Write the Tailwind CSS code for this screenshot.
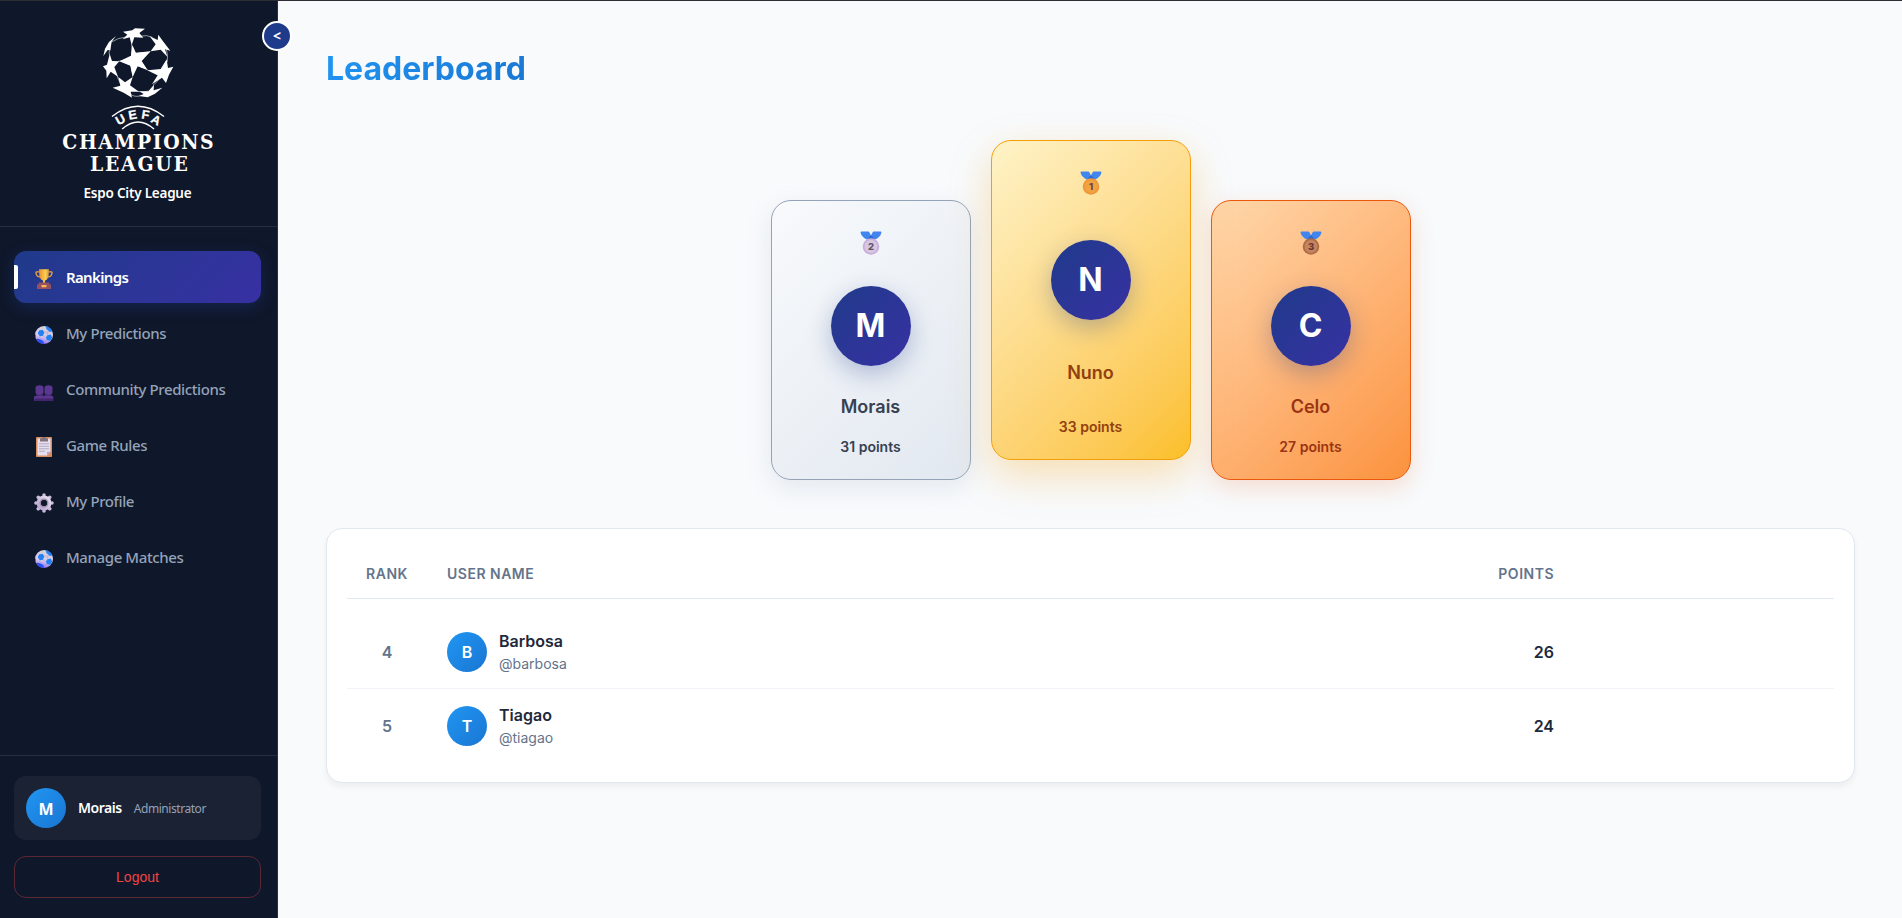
<!DOCTYPE html>
<html lang="en">
<head>
<meta charset="utf-8">
<title>Leaderboard</title>
<script src="https://cdn.jsdelivr.net/npm/@tailwindcss/browser@4"></script>
</head>
<body class="h-screen overflow-hidden bg-[#f8fafc] font-['Inter',sans-serif]">
<svg width="0" height="0" class="absolute">
  <defs>
    <linearGradient id="gold" x1="0" x2="1"><stop offset="0" stop-color="#f08a35"/><stop offset=".65" stop-color="#fbd04f"/><stop offset="1" stop-color="#d9903a"/></linearGradient>
    <linearGradient id="ballg" x1=".6" y1="0" x2=".4" y2="1"><stop offset="0" stop-color="#d5d3d6"/><stop offset=".6" stop-color="#d3c8ee"/><stop offset="1" stop-color="#8a6cf5"/></linearGradient>
    <linearGradient id="gearg" x1="1" y1="0" x2="0" y2="1"><stop offset="0" stop-color="#e6dff0"/><stop offset="1" stop-color="#b9a3cf"/></linearGradient>
    <symbol id="ball" viewBox="0 0 18 18">
      <circle cx="9" cy="9" r="9" fill="url(#ballg)"/>
      <path d="M4 4.500 7.500 3.800 9.300 6.200 8 9.800 4.800 10.200 2.800 7.300zM10.800.300C13.800.700 16.500 2.600 17.500 5.600L14.800 6 11.400 2.900zM12.400 9.200 15.700 8.600 17.300 11.400 15 14.900 11.900 14 10.900 11.600z" fill="#2480f5"/>
      <path d="M2.200 12.800 5 13.200 8.300 15 9.300 18C5.600 18.100 3 16.500 1.500 13.800zM0 8.200 1 9.600.8 12C.1 10.700 0 9.500 0 8.200z" fill="#2a50fa"/>
      <path d="M9.300 6.200 12.400 6l2.400-.2M12.400 6l.3 3.200M8 9.800l2.900 1.800M4.800 10.200 5 13.200M12 14 8.300 15" stroke="#a9a0c4" stroke-width=".5" fill="none"/>
    </symbol>
    <symbol id="ribbon" viewBox="0 0 22 24">
      <path d="M.5 1.600Q.5.500 1.600.500H8.200Q9 .500 9.500 1.500L11 4.500 12.500 1.500Q13 .500 13.800.500H20.400Q21.500.500 21.500 1.600L20.300 4.500Q17.500 8 14.500 9H7.500Q4.500 8 1.700 4.500Z" fill="#4086ee"/>
      <path d="M8.800 6.300 11 4.500 13.200 6.300 14 9H8z" fill="#2f68cf"/>
    </symbol>
  </defs>
</svg>

<div class="flex h-full border-t border-[#2d2d33]">
  <aside class="relative flex w-[278px] shrink-0 flex-col border-r border-[#272f40] bg-[#0f172a] font-['Noto_Sans','Open_Sans',sans-serif]">
    <button class="absolute top-5 left-[262px] z-10 flex size-[30px] items-center justify-center rounded-full border-2 border-white bg-[#1e3a8a] text-sm font-bold leading-none text-white">&lt;</button>

    <header class="h-[226px] border-b border-[#272e3f]">
      <svg class="block" width="277" height="178" viewBox="0 1 277 178" fill="#fff">
        <g transform="translate(95 22) scale(.3333)">
          <path d="M112 69 122 92 167 88 140 117 158 145 128 133 113 165 106 131 73 118 108 101Z"/>
          <path d="M84 29 112 25 120 19 150 20 133 33 145 47 118 46 110 70 104 46 83 52 97 38Z"/>
          <path d="M190 38 204 58 226 86 210 82 217 104 197 83 167 88 182 67 164 43 188 54Z"/>
          <path d="M215 112 219 138 235 134 222 158 213 183 201 167 171 187 188 160 158 145 197 141Z"/>
          <path d="M131 222 146 216 133 208 160 208 177 188 176 205 202 197 180 215 158 226Z"/>
          <path d="M53 197 76 191 70 165 90 181 113 165 105 190 132 209 107 209 111 227 86 212Z"/>
          <path d="M44 96 51 117 73 118 58 135 69 164 47 149 35 169 34 146 24 133 36 128Z"/>
          <path d="M63 42 50 59 46 85 38 84 25 102 30 80 42 60Z"/>
          <g fill="none" stroke="#fff" stroke-width="1.600">
            <path d="M110 67C110 75 112 85 118 98M165 88 145 100M156 143Q168 150 188 158M113 163Q112 155 116 145M70 118Q90 116 108 108M50 60Q68 47 95 45M45 80Q40 95 44 100M140 42Q154 38 172 46M214 80Q220 103 217 120M66 160Q68 170 76 184M128 208Q145 213 160 207M174 190Q190 178 196 165M105 215Q116 226 135 222"/>
          </g>
          <g fill="#fff" stroke="#fff" stroke-width="3" stroke-linejoin="round">
            <path d="M112 74 122 95 158 91 137 117 152 139 127 130 113 157 108 129 80 118 110 103Z"/>
            <path d="M92 45 106 32 135 25 128 42 112 44ZM186 55 200 64 212 78 196 78 182 80 188 68ZM205 144 221 142 212 164 196 158ZM86 190 100 188 104 203 88 204ZM40 124 54 122 56 140 40 142Z" stroke-width="1"/>
          </g>
        </g>
        <g fill="none" stroke="#fff" stroke-width="1.500"><path d="M112 116.500Q138 96 164 116.500M122.200 129Q138 115 154 129"/></g>
        <g font-family="Liberation Sans,sans-serif" font-weight="700" font-size="12.500" text-anchor="middle" stroke="#fff" stroke-width=".3">
          <text transform="translate(122.400 123.300) rotate(-29)">U</text>
          <text transform="translate(133.300 119) rotate(-10)">E</text>
          <text transform="translate(144.700 119) rotate(10)">F</text>
          <text transform="translate(154 123.800) rotate(29)">A</text>
        </g>
        <g font-family="DejaVu Serif,serif" font-weight="700" font-size="20.500" transform="scale(.92 1)">
          <text x="67.800" y="149" textLength="164.500" lengthAdjust="spacing">CHAMPIONS</text>
          <text x="97.800" y="171" textLength="106.500" lengthAdjust="spacing">LEAGUE</text>
        </g>
      </svg>
      <p class="mt-1 pr-[2px] text-center text-[13.500px] font-semibold leading-5 tracking-[-0.220px] text-white">Espo City League</p>
    </header>

    <nav class="flex flex-1 flex-col gap-1 pt-6 pr-4 pl-[14px] text-[15px] font-medium tracking-[-0.400px] text-[#94a3b8]">
      <a class="relative flex h-[52px] items-center rounded-xl bg-linear-135 from-[#1e3a8a] to-[#3730a3] pl-5 font-semibold tracking-[-0.650px] text-white shadow-[0_4px_15px_rgba(30,58,138,0.4)]">
        <span class="absolute top-[14px] left-0 h-6 w-1 rounded-r-[2px] bg-white"></span>
        <svg class="mt-1 mr-3" width="20" height="20" viewBox="0 0 20 20">
          <path d="M5.500 2.800H2.600Q1.800 2.800 2 4 2.500 8 6.500 8M14.500 2.800h2.900q.8 0 .6 1.200-.5 4-4.500 4" fill="none" stroke="#e8a63c" stroke-width="1.300"/>
          <path d="M5 .2h10l-.3 6Q14 10.800 11 11.500V14H9v-2.500Q6 10.800 5.300 6.200z" fill="url(#gold)"/>
          <path d="M5 13.500H15L15.800 15.500H17V20H3V15.500H4.200z" fill="#965060"/>
          <rect x="7.500" y="16" width="5" height="2.200" rx=".4" fill="#f5b755"/>
        </svg>
        <span>Rankings</span>
      </a>
      <a class="flex h-[52px] items-center pl-5"><svg class="mt-[3px] ml-[1px] mr-[13px]" width="18" height="18"><use href="#ball"/></svg><span>My Predictions</span></a>
      <a class="flex h-[52px] items-center pl-5">
        <svg class="mt-2 mr-3" width="20" height="16" viewBox="0 0 20 16" fill="#5b378f">
          <path d="M1.500 3Q1.500.3 5.500.3T9.500 3V7.500Q9 10 7.500 10.600H9.800V16H0V12Q.3 10.800 3.500 10.600 1.800 9.500 1.500 7.500z"/>
          <path d="M10.500 3Q10.500.3 14.500.3T18.500 3V7.500Q18 9.500 16.500 10.600 19 10.800 19.300 12V16H10V10.600H12.500Q11 10 10.500 7.500z"/>
          <path d="M1 13.500H9.500V16H0zM10.200 13.500H19V16H10.200z" fill="#43246c"/>
          <path d="M2 7.500Q5.500 12.500 9 7.500L8 11H3.500zM11 7.500Q14.500 12.500 18 7.500L16.500 11H12z" fill="#48286f"/>
        </svg><span>Community Predictions</span>
      </a>
      <a class="flex h-[52px] items-center pl-5">
        <svg class="mt-[3px] mr-3" width="20" height="20" viewBox="0 0 20 20">
          <rect x="2" y="0" width="16" height="20" rx=".8" fill="#d98d5c"/>
          <path d="M3.500 1.500H16.500V14.800L13 18.500H3.500z" fill="#e6dff0"/>
          <path d="M13 14.800h3.500L13 18.500z" fill="#b9a9cc"/>
          <path d="M6 4.500V2.200Q6 1 7.500 1H8.500V0h3V1h1Q14 1 14 2.200V4.500z" fill="#83747d"/>
          <path d="M5 6.800H15M5 9.300H15M5 11.800H15M5 14.300H11" stroke="#b0a6ba" stroke-width=".9"/>
        </svg><span>Game Rules</span>
      </a>
      <a class="flex h-[52px] items-center pl-5">
        <svg class="mt-[3px] mr-3" width="20" height="20" viewBox="0 0 20 20">
          <g stroke-width="3.600" stroke-linecap="round"><path d="M10 2V2.100M10 18V17.900M2 10H2.100M18 10H17.900M4.300 4.300 4.500 4.500M15.700 15.700 15.500 15.500M4.300 15.700 4.500 15.500M15.700 4.300 15.500 4.500" stroke="#cbbbdc"/></g>
          <circle cx="10" cy="10" r="5.400" fill="#0f172a" stroke="url(#gearg)" stroke-width="4.200"/>
          <circle cx="10" cy="10" r="3.900" fill="none" stroke="#978ba4" stroke-width="1.100"/>
        </svg><span>My Profile</span>
      </a>
      <a class="flex h-[52px] items-center pl-5"><svg class="mt-[3px] ml-[1px] mr-[13px]" width="18" height="18"><use href="#ball"/></svg><span>Manage Matches</span></a>
    </nav>

    <footer class="flex h-[163px] flex-col gap-4 border-t border-[#272e3f] pt-5 pr-4 pl-[14px]">
      <div class="flex h-16 shrink-0 items-center rounded-xl bg-[#1b2233] pl-3">
        <div class="flex size-10 items-center justify-center rounded-full bg-linear-135 from-[#2196f3] to-[#1976d2] pt-px text-base font-bold text-white">M</div>
        <span class="ml-3 text-sm font-semibold tracking-[-0.450px] text-white">Morais</span>
        <span class="ml-3 pt-px text-xs tracking-[-0.450px] text-[#94a3b8]">Administrator</span>
      </div>
      <button class="h-[42px] shrink-0 rounded-xl border border-[#ef4444]/35 font-['Liberation_Sans',sans-serif] text-sm text-[#ef4444]">Logout</button>
    </footer>
  </aside>

  <main class="flex-1 pt-12 pr-[47px] pl-12">
    <h1 class="w-fit bg-linear-135 from-[#2196f3] to-[#1976d2] bg-clip-text text-[32px] leading-10 font-bold text-transparent">Leaderboard</h1>

    <section class="mt-[51px] flex h-[340px] items-end justify-center gap-5">
      <article class="flex h-[280px] w-[200px] flex-col items-center rounded-[20px] border border-[#94a3b8] bg-linear-135 from-[#f8fafc] to-[#e2e8f0] pt-[30px] text-[#374151] shadow-[0_8px_25px_rgba(148,163,184,0.2)]">
        <svg width="22" height="24" viewBox="0 0 22 24"><use href="#ribbon"/><circle cx="11" cy="15.500" r="8.300" fill="#c9aedd"/><circle cx="11" cy="15.500" r="6.500" fill="#d6c8e1"/><text x="11" y="18.900" text-anchor="middle" font-family="Inter" font-weight="800" font-size="9.500" fill="#625469">2</text></svg>
        <div class="mt-[31px] flex size-20 shrink-0 items-center justify-center rounded-full bg-linear-135 from-[#1e3a8a] to-[#3730a3] text-[32px] font-bold text-white shadow-[0_8px_25px_rgba(30,58,138,0.3)]">M</div>
        <h2 class="mt-[27px] text-lg leading-7 font-semibold">Morais</h2>
        <p class="mt-[16px] text-sm leading-5 font-semibold">31 points</p>
      </article>
      <article class="z-10 mb-5 flex h-[320px] w-[200px] flex-col items-center rounded-[20px] border border-[#f59e0b] bg-linear-135 from-[#fef3c7] to-[#fbbf24] pt-[30px] text-[#92400e] shadow-[0_15px_40px_rgba(245,158,11,0.3)]">
        <svg width="22" height="24" viewBox="0 0 22 24"><use href="#ribbon"/><circle cx="11" cy="15.500" r="8.300" fill="#ee963a"/><circle cx="11" cy="15.500" r="6.500" fill="#f2a341"/><text x="11" y="18.900" text-anchor="middle" font-family="Inter" font-weight="800" font-size="9.500" fill="#71434e">1</text></svg>
        <div class="mt-[45px] flex size-20 shrink-0 items-center justify-center rounded-full bg-linear-135 from-[#1e3a8a] to-[#3730a3] text-[32px] font-bold text-white shadow-[0_8px_25px_rgba(30,58,138,0.3)]">N</div>
        <h2 class="mt-[39px] text-lg leading-7 font-semibold">Nuno</h2>
        <p class="mt-[30px] text-sm leading-5 font-semibold">33 points</p>
      </article>
      <article class="flex h-[280px] w-[200px] flex-col items-center rounded-[20px] border border-[#ea580c] bg-linear-135 from-[#fed7aa] to-[#fb923c] pt-[30px] text-[#9a3412] shadow-[0_8px_25px_rgba(234,88,12,0.18)]">
        <svg width="22" height="24" viewBox="0 0 22 24"><use href="#ribbon"/><circle cx="11" cy="15.500" r="8.300" fill="#ae6b4b"/><circle cx="11" cy="15.500" r="6.500" fill="#c5855a"/><text x="11" y="18.900" text-anchor="middle" font-family="Inter" font-weight="800" font-size="9.500" fill="#6b3540">3</text></svg>
        <div class="mt-[31px] flex size-20 shrink-0 items-center justify-center rounded-full bg-linear-135 from-[#1e3a8a] to-[#3730a3] text-[32px] font-bold text-white shadow-[0_8px_25px_rgba(30,58,138,0.3)]">C</div>
        <h2 class="mt-[27px] text-lg leading-7 font-semibold">Celo</h2>
        <p class="mt-[16px] text-sm leading-5 font-semibold">27 points</p>
      </article>
    </section>

    <section class="mt-12 h-[255px] rounded-2xl border border-[#e2e8f0] bg-white px-5 pt-5 shadow-[0_4px_6px_rgba(0,0,0,0.05)]">
      <div class="flex h-[50px] items-center border-b border-[#e2e8f0] pt-px text-sm font-semibold tracking-[0.500px] text-[#64748b]">
        <span class="w-20 text-center">RANK</span>
        <span class="ml-5 flex-1">USER NAME</span>
        <span class="mr-[280px]">POINTS</span>
      </div>
      <div class="mt-4 flex h-[74px] items-center border-b border-[#f1f5f9] font-semibold text-[#1e293b]">
        <span class="w-20 text-center text-[#64748b]">4</span>
        <div class="ml-5 flex size-10 items-center justify-center rounded-full bg-linear-135 from-[#2196f3] to-[#1976d2] text-white">B</div>
        <div class="ml-3 flex-1"><p class="leading-6">Barbosa</p><p class="text-sm leading-[21px] font-normal text-[#64748b]">@barbosa</p></div>
        <span class="mr-[280px]">26</span>
      </div>
      <div class="flex h-[73px] items-center font-semibold text-[#1e293b]">
        <span class="w-20 text-center text-[#64748b]">5</span>
        <div class="ml-5 flex size-10 items-center justify-center rounded-full bg-linear-135 from-[#2196f3] to-[#1976d2] text-white">T</div>
        <div class="ml-3 flex-1"><p class="leading-6">Tiagao</p><p class="text-sm leading-[21px] font-normal text-[#64748b]">@tiagao</p></div>
        <span class="mr-[280px]">24</span>
      </div>
    </section>
  </main>
</div>
</body>
</html>
